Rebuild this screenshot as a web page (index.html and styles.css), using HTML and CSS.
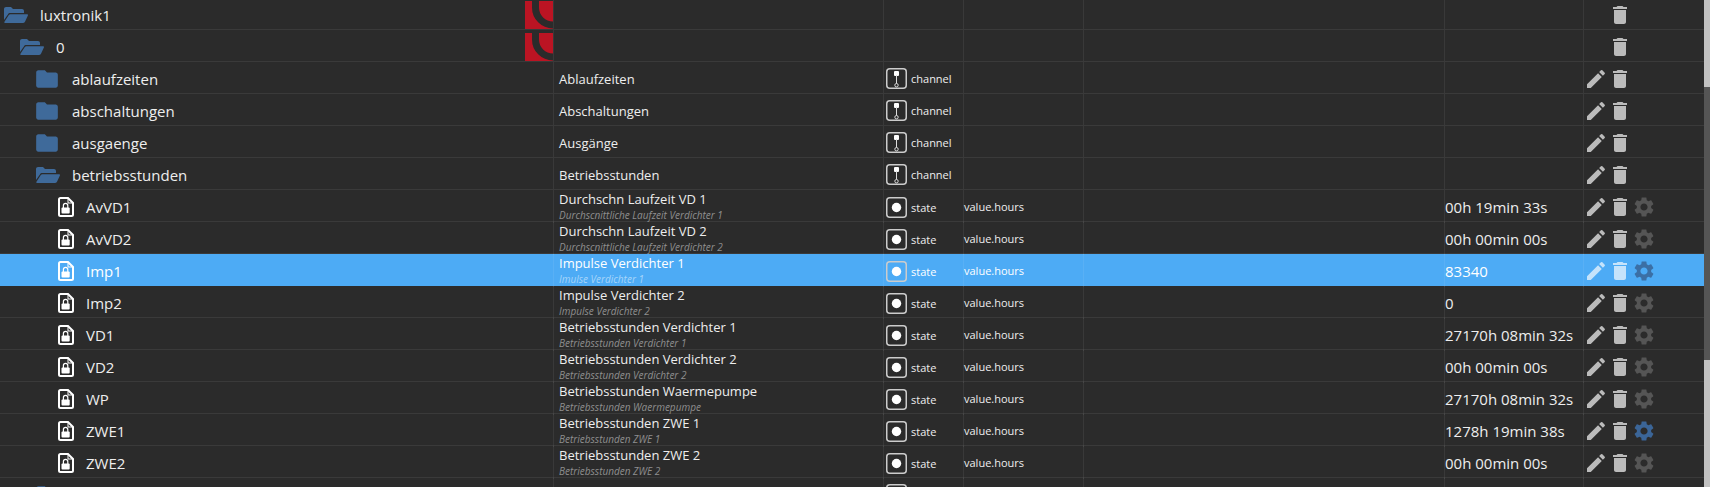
FILE: index.html
```html
<!DOCTYPE html>
<html lang="en">
<head>
  <meta charset="UTF-8">
  <title>Objects - luxtronik1</title>
  <link rel="stylesheet" href="styles.css">
</head>
<body>
<svg class="sprites" width="0" height="0">
  <symbol id="folder-open" viewBox="0 0 24 16">
    <path d="M0 13V2C0 .9.9 0 2 0h5l2 2h9c1.100 0 2 .9 2 2v2H6.300C5.200 6 4.400 6.500 3.900 7.400L0 13z"/>
    <path d="M6.400 7.200H23c.8 0 1.200.7.9 1.300l-2.900 6.300c-.3.7-1 1.200-1.800 1.200H1.100c-.7 0-1.100-.6-.8-1.100L4.800 8.100c.4-.6.9-.9 1.600-.9z"/>
  </symbol>
  <symbol id="folder" viewBox="0 0 24 24">
    <path d="M10 4H4c-1.100 0-1.990.9-1.990 2L2 18c0 1.100.9 2 2 2h16c1.100 0 2-.9 2-2V8c0-1.100-.9-2-2-2h-8l-2-2z"/>
  </symbol>
  <symbol id="file-lock" viewBox="0 0 16 20">
    <path class="file-line" d="M1 2.500Q1 1 2.500 1H10L15 6V17.500Q15 19 13.500 19H2.500Q1 19 1 17.500Z"/>
    <path class="file-fold" d="M10 1V6H15"/>
    <path class="file-shackle" d="M5.400 11V8.600a2.200 2.200 0 0 1 4.400 0V11"/>
    <rect x="3.500" y="10.500" width="8.200" height="6" rx="1"/>
  </symbol>
  <symbol id="type-channel" viewBox="0 0 21 21">
    <rect class="box" x=".75" y=".75" width="19.500" height="19.500" rx="3"/>
    <rect class="dot" x="8" y="3" width="5" height="5" rx="1"/>
    <path class="stem" d="M10.500 7V15.500"/>
    <circle class="stem" cx="10.500" cy="17.200" r="1.700"/>
  </symbol>
  <symbol id="type-state" viewBox="0 0 21 21">
    <rect class="box" x=".75" y=".75" width="19.500" height="19.500" rx="3"/>
    <circle class="dot" cx="10.500" cy="10.500" r="4.700"/>
  </symbol>
  <symbol id="edit" viewBox="0 0 24 24">
    <path d="M3 17.250V21h3.750L17.810 9.940l-3.750-3.750L3 17.250zM20.710 7.040c.39-.39.39-1.020 0-1.410l-2.340-2.340a.9959.9959 0 0 0-1.410 0l-1.830 1.830 3.750 3.750 1.830-1.830z"/>
  </symbol>
  <symbol id="delete" viewBox="0 0 24 24">
    <path d="M6 19c0 1.100.9 2 2 2h8c1.100 0 2-.9 2-2V7H6v12zM19 4h-3.500l-1-1h-5l-1 1H5v2h14V4z"/>
  </symbol>
  <symbol id="settings" viewBox="0 0 24 24">
    <path d="M19.140 12.940c.04-.3.06-.61.06-.94 0-.32-.02-.64-.07-.94l2.030-1.580c.18-.14.23-.41.12-.61l-1.920-3.320c-.12-.22-.37-.29-.59-.22l-2.390.96c-.5-.38-1.030-.7-1.620-.94l-.36-2.540c-.04-.24-.24-.41-.48-.41h-3.840c-.24 0-.43.17-.47.41l-.36 2.540c-.59.24-1.130.57-1.620.94l-2.390-.96c-.22-.08-.47 0-.59.22L2.740 8.870c-.12.21-.08.47.12.61l2.030 1.580c-.05.3-.09.63-.09.94s.02.64.07.94l-2.030 1.580c-.18.14-.23.41-.12.61l1.920 3.320c.12.22.37.29.59.22l2.390-.96c.5.38 1.030.7 1.620.94l.36 2.540c.05.24.24.41.48.41h3.840c.24 0 .44-.17.47-.41l.36-2.540c.59-.24 1.130-.56 1.620-.94l2.390.96c.22.08.47 0 .59-.22l1.920-3.320c.12-.22.07-.47-.12-.61l-2.010-1.580zM12 15.600c-1.980 0-3.600-1.620-3.600-3.600s1.620-3.600 3.600-3.600 3.600 1.620 3.600 3.600-1.620 3.600-3.600 3.600z"/>
  </symbol>
  <symbol id="logo" viewBox="0 0 28 28">
    <rect class="logo-bg" width="28" height="28"/>
    <path class="logo-arc" d="M10.500 0V6.500A17.500 17.500 0 0 0 28 24"/>
  </symbol>
</svg>

<div class="page">
  <div class="tree">

    <div class="row">
      <div class="cell name depth-0"><svg class="ico-open"><use href="#folder-open"/></svg><span>luxtronik1</span></div>
      <div class="cell desc logo-cell"><svg class="logo"><use href="#logo"/></svg></div>
      <div class="cell type"></div>
      <div class="cell role"></div>
      <div class="cell room"></div>
      <div class="cell value"></div>
      <div class="cell actions"><span class="slot"></span><svg class="act"><use href="#delete"/></svg></div>
    </div>

    <div class="row">
      <div class="cell name depth-1"><svg class="ico-open"><use href="#folder-open"/></svg><span>0</span></div>
      <div class="cell desc logo-cell"><svg class="logo"><use href="#logo"/></svg></div>
      <div class="cell type"></div>
      <div class="cell role"></div>
      <div class="cell room"></div>
      <div class="cell value"></div>
      <div class="cell actions"><span class="slot"></span><svg class="act"><use href="#delete"/></svg></div>
    </div>

    <div class="row">
      <div class="cell name depth-2"><svg class="ico-folder"><use href="#folder"/></svg><span>ablaufzeiten</span></div>
      <div class="cell desc"><div class="title">Ablaufzeiten</div></div>
      <div class="cell type"><svg class="ico-type"><use href="#type-channel"/></svg><span>channel</span></div>
      <div class="cell role"></div>
      <div class="cell room"></div>
      <div class="cell value"></div>
      <div class="cell actions"><svg class="act"><use href="#edit"/></svg><svg class="act"><use href="#delete"/></svg></div>
    </div>

    <div class="row">
      <div class="cell name depth-2"><svg class="ico-folder"><use href="#folder"/></svg><span>abschaltungen</span></div>
      <div class="cell desc"><div class="title">Abschaltungen</div></div>
      <div class="cell type"><svg class="ico-type"><use href="#type-channel"/></svg><span>channel</span></div>
      <div class="cell role"></div>
      <div class="cell room"></div>
      <div class="cell value"></div>
      <div class="cell actions"><svg class="act"><use href="#edit"/></svg><svg class="act"><use href="#delete"/></svg></div>
    </div>

    <div class="row">
      <div class="cell name depth-2"><svg class="ico-folder"><use href="#folder"/></svg><span>ausgaenge</span></div>
      <div class="cell desc"><div class="title">Ausgänge</div></div>
      <div class="cell type"><svg class="ico-type"><use href="#type-channel"/></svg><span>channel</span></div>
      <div class="cell role"></div>
      <div class="cell room"></div>
      <div class="cell value"></div>
      <div class="cell actions"><svg class="act"><use href="#edit"/></svg><svg class="act"><use href="#delete"/></svg></div>
    </div>

    <div class="row">
      <div class="cell name depth-2"><svg class="ico-open"><use href="#folder-open"/></svg><span>betriebsstunden</span></div>
      <div class="cell desc"><div class="title">Betriebsstunden</div></div>
      <div class="cell type"><svg class="ico-type"><use href="#type-channel"/></svg><span>channel</span></div>
      <div class="cell role"></div>
      <div class="cell room"></div>
      <div class="cell value"></div>
      <div class="cell actions"><svg class="act"><use href="#edit"/></svg><svg class="act"><use href="#delete"/></svg></div>
    </div>

    <div class="row">
      <div class="cell name depth-3"><svg class="ico-file"><use href="#file-lock"/></svg><span>AvVD1</span></div>
      <div class="cell desc"><div class="title">Durchschn Laufzeit VD 1</div><div class="sub">Durchscnittliche Laufzeit Verdichter 1</div></div>
      <div class="cell type"><svg class="ico-type"><use href="#type-state"/></svg><span>state</span></div>
      <div class="cell role">value.hours</div>
      <div class="cell room"></div>
      <div class="cell value">00h 19min 33s</div>
      <div class="cell actions"><svg class="act"><use href="#edit"/></svg><svg class="act"><use href="#delete"/></svg><svg class="act gear"><use href="#settings"/></svg></div>
    </div>

    <div class="row">
      <div class="cell name depth-3"><svg class="ico-file"><use href="#file-lock"/></svg><span>AvVD2</span></div>
      <div class="cell desc"><div class="title">Durchschn Laufzeit VD 2</div><div class="sub">Durchscnittliche Laufzeit Verdichter 2</div></div>
      <div class="cell type"><svg class="ico-type"><use href="#type-state"/></svg><span>state</span></div>
      <div class="cell role">value.hours</div>
      <div class="cell room"></div>
      <div class="cell value">00h 00min 00s</div>
      <div class="cell actions"><svg class="act"><use href="#edit"/></svg><svg class="act"><use href="#delete"/></svg><svg class="act gear"><use href="#settings"/></svg></div>
    </div>

    <div class="row selected">
      <div class="cell name depth-3"><svg class="ico-file"><use href="#file-lock"/></svg><span>Imp1</span></div>
      <div class="cell desc"><div class="title">Impulse Verdichter 1</div><div class="sub">Imulse Verdichter 1</div></div>
      <div class="cell type"><svg class="ico-type"><use href="#type-state"/></svg><span>state</span></div>
      <div class="cell role">value.hours</div>
      <div class="cell room"></div>
      <div class="cell value">83340</div>
      <div class="cell actions"><svg class="act"><use href="#edit"/></svg><svg class="act"><use href="#delete"/></svg><svg class="act gear on"><use href="#settings"/></svg></div>
    </div>

    <div class="row">
      <div class="cell name depth-3"><svg class="ico-file"><use href="#file-lock"/></svg><span>Imp2</span></div>
      <div class="cell desc"><div class="title">Impulse Verdichter 2</div><div class="sub">Impulse Verdichter 2</div></div>
      <div class="cell type"><svg class="ico-type"><use href="#type-state"/></svg><span>state</span></div>
      <div class="cell role">value.hours</div>
      <div class="cell room"></div>
      <div class="cell value">0</div>
      <div class="cell actions"><svg class="act"><use href="#edit"/></svg><svg class="act"><use href="#delete"/></svg><svg class="act gear"><use href="#settings"/></svg></div>
    </div>

    <div class="row">
      <div class="cell name depth-3"><svg class="ico-file"><use href="#file-lock"/></svg><span>VD1</span></div>
      <div class="cell desc"><div class="title">Betriebsstunden Verdichter 1</div><div class="sub">Betriebsstunden Verdichter 1</div></div>
      <div class="cell type"><svg class="ico-type"><use href="#type-state"/></svg><span>state</span></div>
      <div class="cell role">value.hours</div>
      <div class="cell room"></div>
      <div class="cell value">27170h 08min 32s</div>
      <div class="cell actions"><svg class="act"><use href="#edit"/></svg><svg class="act"><use href="#delete"/></svg><svg class="act gear"><use href="#settings"/></svg></div>
    </div>

    <div class="row">
      <div class="cell name depth-3"><svg class="ico-file"><use href="#file-lock"/></svg><span>VD2</span></div>
      <div class="cell desc"><div class="title">Betriebsstunden Verdichter 2</div><div class="sub">Betriebsstunden Verdichter 2</div></div>
      <div class="cell type"><svg class="ico-type"><use href="#type-state"/></svg><span>state</span></div>
      <div class="cell role">value.hours</div>
      <div class="cell room"></div>
      <div class="cell value">00h 00min 00s</div>
      <div class="cell actions"><svg class="act"><use href="#edit"/></svg><svg class="act"><use href="#delete"/></svg><svg class="act gear"><use href="#settings"/></svg></div>
    </div>

    <div class="row">
      <div class="cell name depth-3"><svg class="ico-file"><use href="#file-lock"/></svg><span>WP</span></div>
      <div class="cell desc"><div class="title">Betriebsstunden Waermepumpe</div><div class="sub">Betriebsstunden Waermepumpe</div></div>
      <div class="cell type"><svg class="ico-type"><use href="#type-state"/></svg><span>state</span></div>
      <div class="cell role">value.hours</div>
      <div class="cell room"></div>
      <div class="cell value">27170h 08min 32s</div>
      <div class="cell actions"><svg class="act"><use href="#edit"/></svg><svg class="act"><use href="#delete"/></svg><svg class="act gear"><use href="#settings"/></svg></div>
    </div>

    <div class="row">
      <div class="cell name depth-3"><svg class="ico-file"><use href="#file-lock"/></svg><span>ZWE1</span></div>
      <div class="cell desc"><div class="title">Betriebsstunden ZWE 1</div><div class="sub">Betriebsstunden ZWE 1</div></div>
      <div class="cell type"><svg class="ico-type"><use href="#type-state"/></svg><span>state</span></div>
      <div class="cell role">value.hours</div>
      <div class="cell room"></div>
      <div class="cell value">1278h 19min 38s</div>
      <div class="cell actions"><svg class="act"><use href="#edit"/></svg><svg class="act"><use href="#delete"/></svg><svg class="act gear on"><use href="#settings"/></svg></div>
    </div>

    <div class="row">
      <div class="cell name depth-3"><svg class="ico-file"><use href="#file-lock"/></svg><span>ZWE2</span></div>
      <div class="cell desc"><div class="title">Betriebsstunden ZWE 2</div><div class="sub">Betriebsstunden ZWE 2</div></div>
      <div class="cell type"><svg class="ico-type"><use href="#type-state"/></svg><span>state</span></div>
      <div class="cell role">value.hours</div>
      <div class="cell room"></div>
      <div class="cell value">00h 00min 00s</div>
      <div class="cell actions"><svg class="act"><use href="#edit"/></svg><svg class="act"><use href="#delete"/></svg><svg class="act gear"><use href="#settings"/></svg></div>
    </div>

    <div class="row">
      <div class="cell name depth-2"><svg class="ico-folder"><use href="#folder"/></svg></div>
      <div class="cell desc"></div>
      <div class="cell type"><svg class="ico-type"><use href="#type-channel"/></svg></div>
      <div class="cell role"></div>
      <div class="cell room"></div>
      <div class="cell value"></div>
      <div class="cell actions"></div>
    </div>

  </div>
  <div class="scrollbar"><div class="thumb"></div></div>
</div>
</body>
</html>
```

FILE: styles.css
```css
* {
  box-sizing: border-box;
}

html, body {
  margin: 0;
  height: 100%;
  overflow: hidden;
  background: #2b2b2b;
}

body {
  font-family: "Open Sans", "Noto Sans", sans-serif;
  color: #eee;
}

.sprites {
  position: absolute;
}

.page {
  display: flex;
  height: 100vh;
  overflow: hidden;
}

.tree {
  flex: 1;
  min-width: 0;
  margin-top: -2px;
}

.scrollbar {
  width: 6px;
  background: #c1c1c1;
  padding-top: 87px;
}

.thumb {
  height: 273px;
  background: #555;
}

.row {
  display: grid;
  grid-template-columns: 554px 330px 80px 120px 361px 139px 120px;
  height: 32px;
  border-bottom: 1px solid #3a3a3a;
}

.row.selected {
  background: #4dabf5;
  border-bottom-color: transparent;
  color: #fff;
}

.cell {
  display: flex;
  align-items: center;
  min-width: 0;
  border-right: 1px solid rgba(255, 255, 255, .07);
  white-space: nowrap;
}

.name {
  font-size: 15px;
  padding-top: 2px;
}

.depth-0 { padding-left: 4px; }
.depth-1 { padding-left: 20px; }
.depth-2 { padding-left: 34px; }
.depth-3 { padding-left: 58px; padding-top: 0; }

.ico-open {
  width: 24px;
  height: 16px;
  fill: #3f6a9a;
  margin-right: 12px;
}

.depth-2 .ico-open {
  margin-left: 2px;
  margin-right: 12px;
}

.ico-folder {
  width: 26px;
  height: 26px;
  fill: #3f6a9a;
  margin-right: 12px;
}

.ico-file {
  width: 16px;
  height: 20px;
  fill: #fff;
  margin-right: 12px;
}

.file-line {
  fill: none;
  stroke: #fff;
  stroke-width: 2;
}

.file-fold {
  fill: none;
  stroke: #fff;
  stroke-width: 1;
}

.file-shackle {
  fill: none;
  stroke: #fff;
  stroke-width: 1.2;
}

.desc {
  flex-direction: column;
  align-items: flex-start;
  justify-content: center;
  padding-left: 5px;
}

.title {
  font-size: 13px;
  line-height: 18px;
}

.title:only-child {
  margin-top: 3px;
}

.sub {
  font-size: 10px;
  line-height: 12px;
  font-style: italic;
  color: #8f8f8f;
  margin-top: 1px;
  margin-bottom: 2px;
}

.selected .sub {
  color: #a6d5fa;
}

.logo-cell {
  position: relative;
  padding: 0;
}

.logo {
  position: absolute;
  top: 3px;
  left: -29px;
  width: 28px;
  height: 28px;
}

.logo-bg {
  fill: #bb1423;
}

.logo-arc {
  fill: none;
  stroke: #2b2b2b;
  stroke-width: 7;
}

.type {
  font-size: 11px;
  padding-left: 2px;
  padding-top: 1px;
}

.ico-type {
  width: 21px;
  height: 21px;
  margin-right: 4px;
  flex: none;
}

.box {
  fill: none;
  stroke: #ccc;
  stroke-width: 1.5;
}

.dot {
  fill: #fff;
}

.stem {
  fill: none;
  stroke: #ddd;
  stroke-width: 1;
}

.role {
  font-size: 11px;
}

.value {
  font-size: 15px;
  padding-top: 1px;
}

.actions {
  border-right: 0;
  padding-top: 1px;
}

.row:not(:has(.sub)) .actions {
  padding-top: 3px;
}

.slot {
  width: 24px;
}

.act {
  width: 24px;
  height: 24px;
  fill: #bbb;
  flex: none;
}

.act.gear {
  fill: #555;
}

.act.gear.on {
  fill: #3b6597;
}

.selected .act {
  fill: #c5e3fb;
}

.selected .act.gear {
  fill: #3b6fa5;
}

.selected .box {
  stroke: #e3f2fd;
}
```
